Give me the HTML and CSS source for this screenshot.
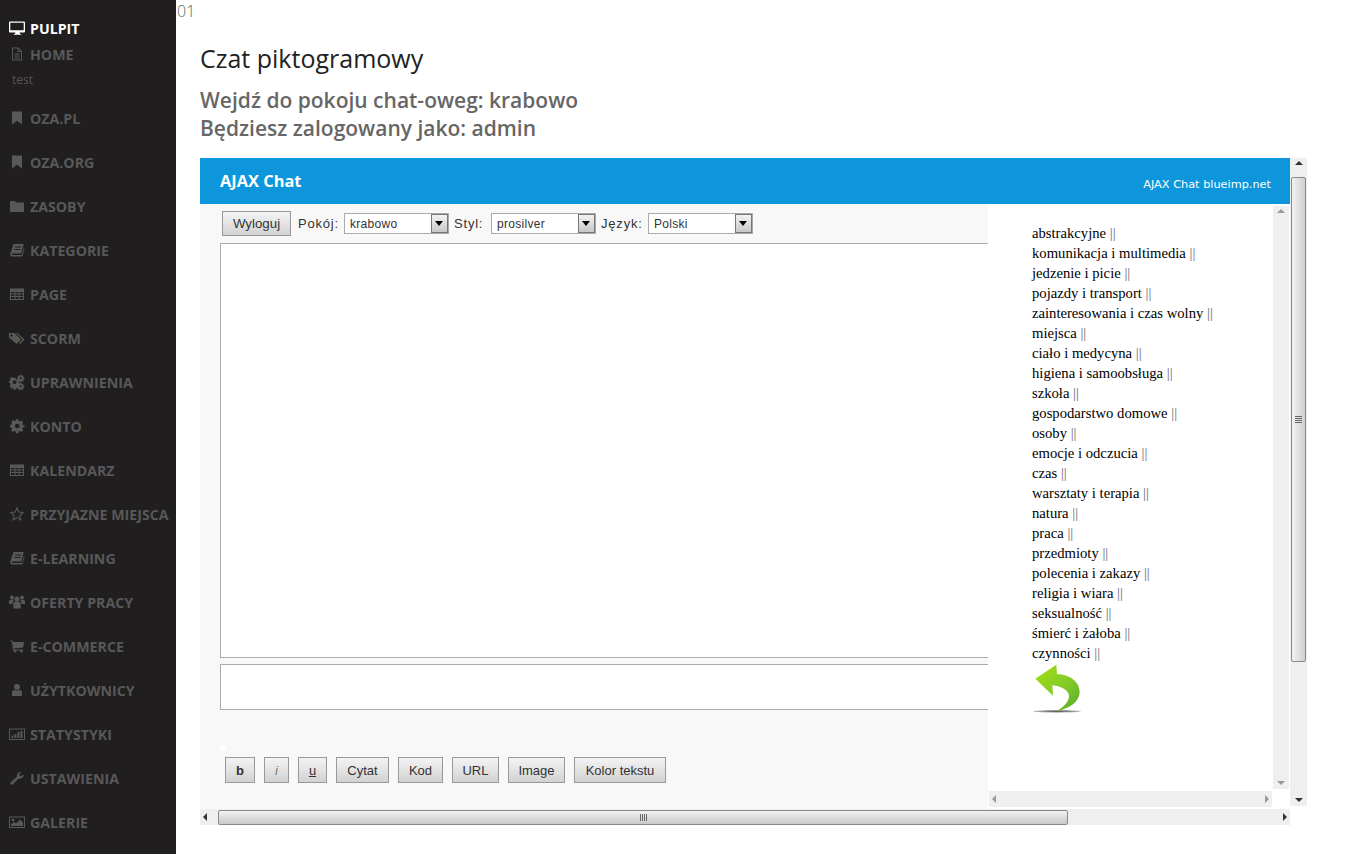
FILE: index.html
```html
<!DOCTYPE html>
<html lang="pl">
<head>
<meta charset="utf-8">
<title>Czat piktogramowy</title>
<link rel="stylesheet" href="styles.css">
</head>
<body>
<aside class="sidebar">
  <nav class="nav">
    <a class="top active"><svg class="ic" viewBox="0 0 16 16"><path fill-rule="evenodd" d="M0 2.500A1 1 0 0 1 1 1.500h14a1 1 0 0 1 1 1v9a1 1 0 0 1-1 1h-4.500l.7 1.500h1v.8H4.800v-.8h1l.7-1.500H1a1 1 0 0 1-1-1zM1.300 2.800v7.400h13.400V2.800z"/></svg>PULPIT</a>
    <a class="top"><svg class="ic" viewBox="0 0 16 16"><path fill-rule="evenodd" d="M3 1.500h6.500L13 5v9.500H3zM4 2.500v11h8V6H8.500V2.500zM9.500 2.800V5h2.200zM5.500 7.500h5v1h-5zM5.500 9.500h5v1h-5zM5.500 11.500h5v1h-5z"/></svg>HOME</a>
    <div class="sub">test</div>
    <a><svg class="ic" viewBox="0 0 16 16"><path d="M3 1.500h10v13l-5-3.700-5 3.700z"/></svg>OZA.PL</a>
    <a><svg class="ic" viewBox="0 0 16 16"><path d="M3 1.500h10v13l-5-3.700-5 3.700z"/></svg>OZA.ORG</a>
    <a><svg class="ic" viewBox="0 0 16 16"><path d="M1 4q0-1 1-1h4l1 1.500h7q1 0 1 1V13q0 1-1 1H2q-1 0-1-1z"/></svg>ZASOBY</a>
    <a><svg class="ic" viewBox="0 0 16 16"><path fill-rule="evenodd" d="M4.500 2h10.300l-2.600 9.500H3.600c-1 0-1.200 1.500 0 1.500h9.300l2-7 .6.700-2.100 7.800H3C1.300 14.500.8 13 1.300 11.500zM6 4.500v1h6.200v-1zM5.500 7v1h6.200V7z"/></svg>KATEGORIE</a>
    <a><svg class="ic" viewBox="0 0 16 16"><path fill-rule="evenodd" d="M1 2.500h14v11.500H1zM2 6v1.500h3.500V6zM6.500 6v1.500h3V6zM10.500 6v1.500H14V6zM2 8.500V10h3.500V8.500zM6.500 8.500V10h3V8.500zM10.500 8.500V10H14V8.500zM2 11v2h3.500v-2zM6.500 11v2h3v-2zM10.500 11v2H14v-2z"/></svg>PAGE</a>
    <a><svg class="ic" viewBox="0 0 16 16"><path fill-rule="evenodd" d="M0 3h5.500L12 9.500 7.500 14 0 7.500zM2.500 4.300a1.200 1.200 0 1 0 .01 0zM7 3h1.500l7 6.500L11 14l-1-1 3.500-3.500z"/></svg>SCORM</a>
    <a><svg class="ic" viewBox="0 0 16 16"><path fill-rule="evenodd" d="M4.300 4h2l.3 1.300 1 .5 1.200-.6 1.300 1.400-.7 1.200.4 1 1.200.3v1.800l-1.200.3-.4 1 .7 1.200-1.300 1.300-1.200-.7-1 .5-.3 1.200h-2l-.3-1.200-1-.5-1.200.7L.6 11.200l.7-1.200-.4-1L-.300 8.700V6.900l1.200-.3.400-1-.7-1.200 1.300-1.400 1.200.7 1-.5zM5.300 6.200a1.900 1.900 0 1 0 .01 0z" transform="translate(.3 0)"/><path fill-rule="evenodd" d="M12.500 1.500h1.300l.2.800.8.300.7-.4.8.9-.4.700.3.800.8.200v1.200l-.8.200-.3.800.4.700-.8.900-.7-.4-.8.3-.2.800h-1.300l-.2-.8-.8-.3-.7.400-.8-.9.4-.7-.3-.8-.8-.2V4.700l.8-.2.300-.8-.4-.7.8-.9.7.4.8-.3zM13.100 3.900a1.100 1.100 0 1 0 .01 0z" transform="translate(-.8 -.6) scale(.95)"/><path fill-rule="evenodd" d="M12.500 1.500h1.300l.2.800.8.300.7-.4.8.9-.4.700.3.800.8.200v1.200l-.8.200-.3.800.4.700-.8.900-.7-.4-.8.3-.2.800h-1.300l-.2-.8-.8-.3-.7.400-.8-.9.4-.7-.3-.8-.8-.2V4.700l.8-.2.300-.8-.4-.7.8-.9.7.4.8-.3zM13.100 3.900a1.100 1.100 0 1 0 .01 0z" transform="translate(-.8 7.500) scale(.95)"/></svg>UPRAWNIENIA</a>
    <a><svg class="ic" viewBox="0 0 16 16"><path fill-rule="evenodd" d="M7 2h2.400l.4 1.700 1.200.5 1.500-.9 1.700 1.700-.9 1.500.5 1.200 1.700.4V10l-1.700.4-.5 1.200.9 1.500-1.700 1.700-1.500-.9-1.200.5-.4 1.600H7l-.4-1.600-1.200-.5-1.500.9-1.700-1.700.9-1.500-.5-1.200L1 10V7.600l1.600-.4.500-1.200-.9-1.500 1.700-1.700 1.500.9 1.200-.5zM8.200 6.500a2.300 2.300 0 1 0 .01 0z" transform="translate(0 -.8)"/></svg>KONTO</a>
    <a><svg class="ic" viewBox="0 0 16 16"><path fill-rule="evenodd" d="M1 2.500h14v11.500H1zM2 6v1.500h3.500V6zM6.500 6v1.500h3V6zM10.500 6v1.500H14V6zM2 8.500V10h3.500V8.500zM6.500 8.500V10h3V8.500zM10.500 8.500V10H14V8.500zM2 11v2h3.500v-2zM6.500 11v2h3v-2zM10.500 11v2H14v-2z"/></svg>KALENDARZ</a>
    <a><svg class="ic" viewBox="0 0 16 16"><path fill="none" stroke="currentColor" stroke-width="1.100" d="M8 2l1.800 4 4.400.5-3.300 3 .9 4.300L8 11.600l-3.800 2.200.9-4.300-3.300-3L6.200 6z"/></svg>PRZYJAZNE MIEJSCA</a>
    <a><svg class="ic" viewBox="0 0 16 16"><path fill-rule="evenodd" d="M4.500 2h10.300l-2.600 9.500H3.600c-1 0-1.200 1.500 0 1.500h9.300l2-7 .6.700-2.100 7.800H3C1.300 14.500.8 13 1.300 11.500zM6 4.500v1h6.200v-1zM5.500 7v1h6.200V7z"/></svg>E-LEARNING</a>
    <a><svg class="ic" viewBox="0 0 16 16"><circle cx="8" cy="5" r="2.500"/><circle cx="3" cy="3.500" r="2"/><circle cx="13" cy="3.500" r="2"/><path d="M4.300 14.500V10q0-2.500 2-2.500h3.400q2 0 2 2.500v4.500zM0 10V7.500q0-1.800 1.500-1.800H5Q3.300 7.500 3.500 10zM16 10V7.500q0-1.800-1.500-1.800H11q1.700 1.800 1.500 4.300z"/></svg>OFERTY PRACY</a>
    <a><svg class="ic" viewBox="0 0 16 16"><circle cx="6" cy="13.300" r="1.200"/><circle cx="12.500" cy="13.300" r="1.200"/><path d="M1 2.500h2.500l.5 1.500h11l-.8 5.500L5 10.500l.3 1h9v1H4.300L2.700 3.500H1z"/></svg>E-COMMERCE</a>
    <a><svg class="ic" viewBox="0 0 16 16"><circle cx="8" cy="5" r="3"/><path d="M3 14v-3q0-3 2.500-3Q8 9.500 10.500 8 13 8 13 11v3z"/></svg>UŻYTKOWNICY</a>
    <a><svg class="ic" viewBox="0 0 16 16"><path fill-rule="evenodd" d="M0 2.500h16V14H0zM1 3.500V13h14V3.500zM2.500 9.500h2V12h-2zM5.500 8h2v4h-2zM8.500 6h2v6h-2zM11.500 5h2v7h-2z"/></svg>STATYSTYKI</a>
    <a><svg class="ic" viewBox="0 0 16 16"><path d="M1.500 12.500L8 6.500C7.300 4 9.500 1.500 12.500 2L10 4.500l1.800 2 2.700-2.300c.5 3-2 5-4.800 4.300L3.500 14.500q-1 .7-1.800 0-.8-1 -.2-2z"/></svg>USTAWIENIA</a>
    <a><svg class="ic" viewBox="0 0 16 16"><path fill-rule="evenodd" d="M0 2.500h16V14H0zM1 3.500V13h14V3.500zM4 4.500a1.500 1.500 0 1 1-.01 0zM2 12v-1.500l3-2.500 2 1.500 4-4 3 3V12z"/></svg>GALERIE</a>
  </nav>
</aside>
<main class="main">
  <div class="counter">01</div>
  <div class="content">
    <h1>Czat piktogramowy</h1>
    <h2>Wejdź do pokoju chat-oweg: krabowo<br>Będziesz zalogowany jako: admin</h2>
    <div class="frame-row">
      <div class="frame">
        <header class="chat-head">
          <span class="chat-title">AJAX Chat</span>
          <span class="chat-link">AJAX Chat blueimp.net</span>
        </header>
        <div class="chat-body">
          <section class="chat-left">
            <div class="toolbar">
              <button class="btn logout">Wyloguj</button>
              <label class="lab lab-room">Pokój:</label>
              <div class="sel"><span>krabowo</span><i class="sel-arrow"></i></div>
              <label class="lab">Styl:</label>
              <div class="sel"><span>prosilver</span><i class="sel-arrow"></i></div>
              <label class="lab">Język:</label>
              <div class="sel"><span>Polski</span><i class="sel-arrow"></i></div>
            </div>
            <div class="messages"></div>
            <div class="input"></div>
            <div class="dot"></div>
            <div class="bb">
              <button class="btn bb-b"><b>b</b></button>
              <button class="btn bb-i"><em>i</em></button>
              <button class="btn bb-u"><u>u</u></button>
              <button class="btn bb-cytat">Cytat</button>
              <button class="btn bb-kod">Kod</button>
              <button class="btn bb-url">URL</button>
              <button class="btn bb-image">Image</button>
              <button class="btn bb-kolor">Kolor tekstu</button>
            </div>
          </section>
          <section class="chat-right">
            <div class="cats">
              <ul>
                <li>abstrakcyjne <s>||</s></li>
                <li>komunikacja i multimedia <s>||</s></li>
                <li>jedzenie i picie <s>||</s></li>
                <li>pojazdy i transport <s>||</s></li>
                <li>zainteresowania i czas wolny <s>||</s></li>
                <li>miejsca <s>||</s></li>
                <li>ciało i medycyna <s>||</s></li>
                <li>higiena i samoobsługa <s>||</s></li>
                <li>szkoła <s>||</s></li>
                <li>gospodarstwo domowe <s>||</s></li>
                <li>osoby <s>||</s></li>
                <li>emocje i odczucia <s>||</s></li>
                <li>czas <s>||</s></li>
                <li>warsztaty i terapia <s>||</s></li>
                <li>natura <s>||</s></li>
                <li>praca <s>||</s></li>
                <li>przedmioty <s>||</s></li>
                <li>polecenia i zakazy <s>||</s></li>
                <li>religia i wiara <s>||</s></li>
                <li>seksualność <s>||</s></li>
                <li>śmierć i żałoba <s>||</s></li>
                <li>czynności <s>||</s></li>
              </ul>
              <svg class="back" viewBox="155 65 150 152">
                <defs>
                  <linearGradient id="g" x1="0" y1="0" x2="1" y2="1"><stop offset="0" stop-color="#a4e014"/><stop offset=".6" stop-color="#7fc828"/><stop offset="1" stop-color="#58a82c"/></linearGradient>
                  <radialGradient id="sh"><stop offset="0" stop-color="#555"/><stop offset="1" stop-color="#bbb"/></radialGradient>
                </defs>
                <ellipse cx="230" cy="210" rx="72" ry="4" fill="url(#sh)"/>
                <path fill="url(#g)" d="M165 112L228 70 230 98C270 100 298 122 298 152 298 180 268 202 230 209 256 194 272 172 264 156 256 142 236 134 216 132L218 163z"/>
              </svg>
            </div>
            <div class="sb-v sb-inner"><i class="ar up"></i><i class="ar down"></i></div>
            <div class="sb-h sb-inner-h"><i class="ar left"></i><i class="ar right"></i></div>
          </section>
        </div>
      </div>
      <div class="sb-v sb-outer"><i class="ar up dark"></i><div class="thumb-v"><span class="grip-v"></span></div><i class="ar down dark"></i></div>
    </div>
    <div class="sb-h sb-outer-h"><i class="ar left dark"></i><div class="thumb-h"><span class="grip-h"></span></div><i class="ar right dark"></i></div>
  </div>
</main>
</body>
</html>
```

FILE: styles.css
```css
* { box-sizing: border-box; }
html, body { margin: 0; height: 854px; overflow: hidden; background: #fff; }
body { display: flex; font-family: "Open Sans", sans-serif; }

.sidebar { width: 176px; flex: none; height: 854px; background: #201e1f; padding-top: 15px; }
.nav { display: flex; flex-direction: column; }
.nav a { display: flex; align-items: center; gap: 5px; height: 44px; padding-left: 9px; color: #585858; font-size: 14.200px; font-weight: 700; white-space: nowrap; }
.nav a.top { height: 26px; }
.nav a.active { color: #fff; }
.ic { width: 16px; height: 16px; flex: none; fill: currentColor; }
.sub { height: 29px; padding: 5px 0 0 12px; font-size: 12px; line-height: 16px; color: #555; }

.main { flex: 1; min-width: 0; position: relative; }
.counter { font-size: 16px; line-height: 22px; color: #666; padding-left: 1px; font-weight: 300; height: 43px; }
.content { padding-left: 24px; }
h1 { margin: 0; font-size: 25px; line-height: 30px; font-weight: 500; color: #222; }
h2 { margin: 13px 0 0; font-size: 21px; line-height: 28px; font-weight: 600; color: #666; }

.frame-row { display: flex; align-items: flex-start; margin-top: 16px; width: 1107px; }
.frame { width: 1090px; height: 651px; flex: none; display: flex; flex-direction: column; }
.chat-head { height: 46px; flex: none; background: #0d96db; color: #fff; display: flex; justify-content: space-between; align-items: center; padding: 0 19px 0 20px; }
.chat-title { font-size: 16.400px; font-weight: 700; padding-bottom: 2px; }
.chat-link { font-family: "DejaVu Sans", sans-serif; font-size: 11.300px; padding-top: 6px; }
.chat-body { flex: 1; display: flex; min-height: 0; }

.chat-left { width: 788px; flex: none; background: #f8f8f8; padding-left: 20px; overflow: hidden; font-family: "Liberation Sans", sans-serif; }
.toolbar { display: flex; align-items: center; height: 25px; margin-top: 7px; padding-left: 2px; }
.btn { padding: 0; height: 25px; border: 1px solid #999; color: #333; font: 13px "Liberation Sans", sans-serif; background: linear-gradient(#f4f4f4, #d2d2d2); border-radius: 0; }
.logout { width: 69px; font-size: 13.300px; }
.lab { font-size: 13px; letter-spacing: .8px; color: #333; margin-left: 5px; width: 42px; flex: none; }
.lab-room { margin-left: 7px; width: 46px; }
.lab:nth-of-type(2) { width: 37px; }
.lab:nth-of-type(3) { width: 47px; }
.sel { width: 105px; height: 21px; flex: none; display: flex; justify-content: space-between; background: #fff; border: 1px solid #aaa; font-size: 12px; line-height: 20px; color: #333; padding-left: 5px; letter-spacing: .3px; }
.sel-arrow { width: 17px; height: 19px; position: relative; background: linear-gradient(#f2f2f2, #c8c8c8); border: 1px solid #777; }
.sel-arrow::after { content: ""; position: absolute; left: 3px; top: 6px; border: 4px solid transparent; border-top: 5px solid #000; border-bottom: 0; }

.messages { height: 415px; margin-top: 7px; background: #fff; border: 1px solid #aaa; border-right: 0; }
.input { height: 46px; margin-top: 6px; background: #fff; border: 1px solid #aaa; border-right: 0; }
.dot { width: 6px; height: 6px; margin-top: 35px; background: #fff; }
.bb { display: flex; gap: 9px; margin: 6px 0 0 5px; }
.bb .btn { height: 26px; font-size: 13px; }
.bb-b { width: 30px; }
.bb-i { width: 25px; color: #777; }
.bb-u { width: 29px; }
.bb-cytat { width: 53px; }
.bb-kod { width: 45px; }
.bb-url { width: 47px; }
.bb-image { width: 57px; }
.bb-kolor { width: 92px; }

.chat-right { flex: 1; min-width: 0; background: #fff; display: grid; grid-template-columns: 284px 16px; grid-template-rows: 583px 16px; row-gap: 2px; padding: 2px 0 0 1px; }
.cats { padding: 17px 0 0 43px; overflow: hidden; font-family: "Liberation Serif", serif; font-size: 14.670px; line-height: 20px; color: #000; }
.cats ul { list-style: none; margin: 0; padding: 0; }
.cats s { text-decoration: none; color: #667; }
.back { display: block; width: 50px; height: 50.700px; }

.sb-v { display: flex; flex-direction: column; align-items: center; background: #efefef; }
.sb-h { display: flex; align-items: center; background: #efefef; }
.sb-inner { height: 583px; justify-content: space-between; }
.sb-inner-h { justify-content: space-between; width: 283px; }
.sb-outer { width: 17px; height: 648px; flex: none; }
.sb-outer-h { width: 1090px; height: 16px; }
.ar { flex: none; width: 16px; height: 16px; position: relative; display: block; }
.ar::after { content: ""; position: absolute; border: 4px solid transparent; }
.ar.up::after { left: 4px; top: 3px; border-top: 0; border-bottom-color: #999; }
.ar.down::after { left: 4px; top: 8px; border-bottom: 0; border-top-color: #999; }
.ar.left::after { left: 3px; top: 4px; border-left: 0; border-right-color: #999; }
.ar.right::after { left: 9px; top: 4px; border-right: 0; border-left-color: #999; }
.ar.dark.up::after { border-bottom-color: #333; }
.ar.dark.down::after { border-top-color: #333; }
.ar.dark.left::after { border-right-color: #333; }
.ar.dark.right::after { border-left-color: #333; }
.sb-outer .ar.up { height: 19px; }
.sb-outer-h .ar.left { width: 18px; }
.thumb-v { width: 15px; height: 485px; border: 1px solid #888; border-radius: 2px; background: linear-gradient(90deg, #f2f2f2, #cfcfcf); display: flex; align-items: center; justify-content: center; }
.grip-v { width: 7px; height: 7px; margin-top: -1px; background: repeating-linear-gradient(#666 0 1px, transparent 1px 2px); }
.sb-outer .ar.down { margin-top: auto; }
.thumb-h { width: 850px; height: 15px; border: 1px solid #888; border-radius: 2px; background: linear-gradient(#f2f2f2, #c8c8c8); display: flex; align-items: center; justify-content: center; }
.grip-h { width: 7px; height: 7px; background: repeating-linear-gradient(90deg, #666 0 1px, transparent 1px 2px); }
.sb-outer-h .ar.right { margin-left: auto; }
```
